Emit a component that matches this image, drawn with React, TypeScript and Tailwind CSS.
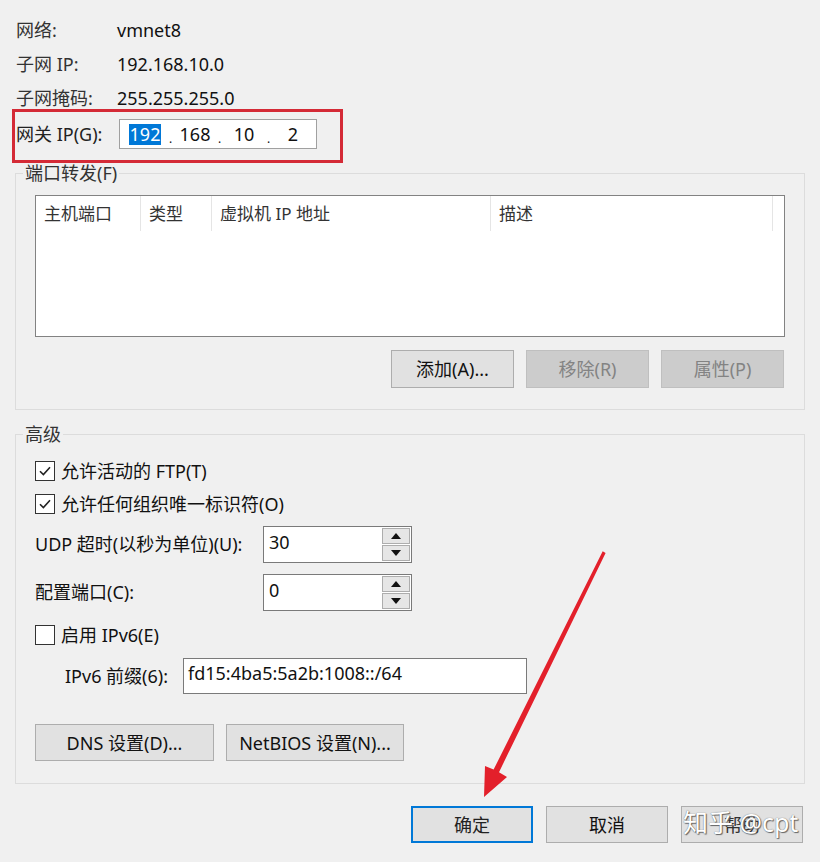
import React from 'react'

const FONT = "font-['Noto_Sans','Noto_Sans_CJK_SC',sans-serif]"

function WinButton({
  children,
  className = '',
  disabled = false,
  primary = false,
}: {
  children: React.ReactNode
  className?: string
  disabled?: boolean
  primary?: boolean
}) {
  const tone = disabled
    ? 'bg-[#cccccc] border border-[#bfbfbf] text-[#838383]'
    : primary
      ? 'bg-[#e1e1e1] border-2 border-[#0078d7] text-[#222]'
      : 'bg-[#e1e1e1] border border-[#adadad] text-[#111]'
  return (
    <div className={`flex items-center justify-center text-[18px] leading-none ${tone} ${className}`}>
      {children}
    </div>
  )
}

function Check({ checked, label }: { checked: boolean; label: string }) {
  return (
    <div className="flex items-center">
      <div className="w-[20px] h-[20px] bg-white border border-[#333] flex items-center justify-center">
        {checked && (
          <svg width="14" height="14" viewBox="0 0 14 14">
            <path d="M2 7.2 L5.4 10.6 L12 3.2" fill="none" stroke="#222" strokeWidth="1.6" />
          </svg>
        )}
      </div>
      <span className="ml-[6px] text-[18px] leading-none">{label}</span>
    </div>
  )
}

function Spin({ value }: { value: string }) {
  return (
    <div className="flex w-[149px] h-[37px] bg-white border border-[#7a7a7a]">
      <span className="flex-1 pl-[5px] pt-[4px] text-[18px] leading-[22px]">{value}</span>
      <div className="w-[30px] flex flex-col gap-[1px] p-[1px]">
        <div className="flex-1 bg-[#e6e6e6] border border-[#adadad] flex items-center justify-center">
          <svg width="10" height="6" viewBox="0 0 10 6"><path d="M0 6 L5 0 L10 6Z" fill="#111" /></svg>
        </div>
        <div className="flex-1 bg-[#e6e6e6] border border-[#adadad] flex items-center justify-center">
          <svg width="10" height="6" viewBox="0 0 10 6"><path d="M0 0 L10 0 L5 6Z" fill="#111" /></svg>
        </div>
      </div>
    </div>
  )
}

export default function App() {
  const cols = [
    { label: '主机端口', w: 'w-[105px]' },
    { label: '类型', w: 'w-[71px]' },
    { label: '虚拟机 IP 地址', w: 'w-[279px]' },
    { label: '描述', w: 'w-[282px]' },
  ]

  return (
    <div className={`relative w-[820px] h-[862px] overflow-hidden bg-[#f0f0f0] text-[#111] ${FONT}`}>
      {/* info rows */}
      <div className="pl-[16px] pt-[13px]">
        {[
          ['网络:', 'vmnet8'],
          ['子网 IP:', '192.168.10.0'],
          ['子网掩码:', '255.255.255.0'],
        ].map(([k, v]) => (
          <div key={k} className="flex items-center h-[34px] text-[18px]">
            <span className="w-[101px] text-[#333]">{k}</span>
            <span>{v}</span>
          </div>
        ))}
        <div className="flex items-center h-[38px] text-[18px]">
          <span className="w-[103px] text-[#222]">网关 IP(G):</span>
          <div className="flex items-center w-[198px] h-[30px] bg-white border border-[#a0a0a0] pl-[1px]">
            <span className="w-[48px] flex justify-center">
              <span className="bg-[#0078d7] text-white px-[1px] leading-[21px]">192</span>
            </span>
            <span className="w-[3px] self-end pb-[3px] text-[12px] leading-none">.</span>
            <span className="w-[46px] text-center leading-none">168</span>
            <span className="w-[3px] self-end pb-[3px] text-[12px] leading-none">.</span>
            <span className="w-[46px] text-center leading-none">10</span>
            <span className="w-[3px] self-end pb-[3px] text-[12px] leading-none">.</span>
            <span className="w-[46px] text-center leading-none">2</span>
          </div>
        </div>
      </div>

      {/* port forwarding */}
      <fieldset className="ml-[15px] mt-[8px] w-[790px] border border-[#dcdcdc] px-[7px] pb-[21px] min-w-0">
        <legend className="px-[2px] text-[18px] leading-[24px] text-[#333]">端口转发(F)</legend>
        <div className="px-[12px] pt-[10px]">
          <div className="h-[142px] bg-white border border-[#828282]">
            <div className="flex h-[35px]">
              {cols.map((c) => (
                <div key={c.label} className={`${c.w} border-r border-[#e5e5e5] pl-[8px] flex items-center text-[17px] text-[#333]`}>
                  {c.label}
                </div>
              ))}
            </div>
          </div>
          <div className="flex justify-end gap-[12px] mt-[13px] pr-[1px]">
            <WinButton className="w-[123px] h-[38px]">添加(A)...</WinButton>
            <WinButton className="w-[123px] h-[38px]" disabled>移除(R)</WinButton>
            <WinButton className="w-[123px] h-[38px]" disabled>属性(P)</WinButton>
          </div>
        </div>
      </fieldset>

      {/* advanced */}
      <fieldset className="ml-[15px] mt-[12px] w-[790px] border border-[#dcdcdc] px-[7px] pb-[22px] min-w-0">
        <legend className="px-[2px] text-[18px] leading-[24px] text-[#333]">高级</legend>
        <div className="px-[12px] pt-[8px]">
          <div className="h-[33px] flex items-center">
            <Check checked label="允许活动的 FTP(T)" />
          </div>
          <div className="h-[33px] flex items-center">
            <Check checked label="允许任何组织唯一标识符(O)" />
          </div>
          <div className="mt-[6px] flex items-center">
            <span className="w-[228px] text-[18px]">UDP 超时(以秒为单位)(U):</span>
            <Spin value="30" />
          </div>
          <div className="mt-[11px] flex items-center">
            <span className="w-[228px] text-[18px]">配置端口(C):</span>
            <Spin value="0" />
          </div>
          <div className="mt-[7px] h-[34px] flex items-center">
            <Check checked={false} label="启用 IPv6(E)" />
          </div>
          <div className="mt-[6px] flex items-center pl-[30px]">
            <span className="w-[118px] text-[18px]">IPv6 前缀(6):</span>
            <div className="w-[344px] h-[36px] bg-white border border-[#7a7a7a] pl-[4px] pt-[3px] text-[18px] leading-[22px]">
              fd15:4ba5:5a2b:1008::/64
            </div>
          </div>
          <div className="mt-[30px] flex gap-[12px]">
            <WinButton className="w-[179px] h-[37px]">DNS 设置(D)...</WinButton>
            <WinButton className="w-[178px] h-[37px]">NetBIOS 设置(N)...</WinButton>
          </div>
        </div>
      </fieldset>

      {/* dialog buttons */}
      <div className="flex justify-end gap-[13px] mt-[22px] pr-[17px]">
        <WinButton className="w-[122px] h-[37px]" primary>确定</WinButton>
        <WinButton className="w-[122px] h-[37px]">取消</WinButton>
        <WinButton className="relative w-[122px] h-[37px]">
          <span className="text-[#333]">帮助</span>
          <span className="absolute left-[1px] top-[3px] text-[25px] leading-none text-white [text-shadow:0_0_1px_#555,1px_1px_1px_#666] whitespace-nowrap">
            知乎 @cpt
          </span>
        </WinButton>
      </div>

      {/* annotations */}
      <div className="absolute left-[12px] top-[109px] w-[331px] h-[54px] border-[3px] border-[#d42a36] pointer-events-none" />
      <svg className="absolute left-0 top-0 pointer-events-none" width="820" height="862" viewBox="0 0 820 862">
        <polygon
          points="602.7,551.3 605.6,552.9 499,772.2 507,777 484,797 485,766 493.6,769.6"
          fill="#e3202b"
        />
      </svg>
    </div>
  )
}
